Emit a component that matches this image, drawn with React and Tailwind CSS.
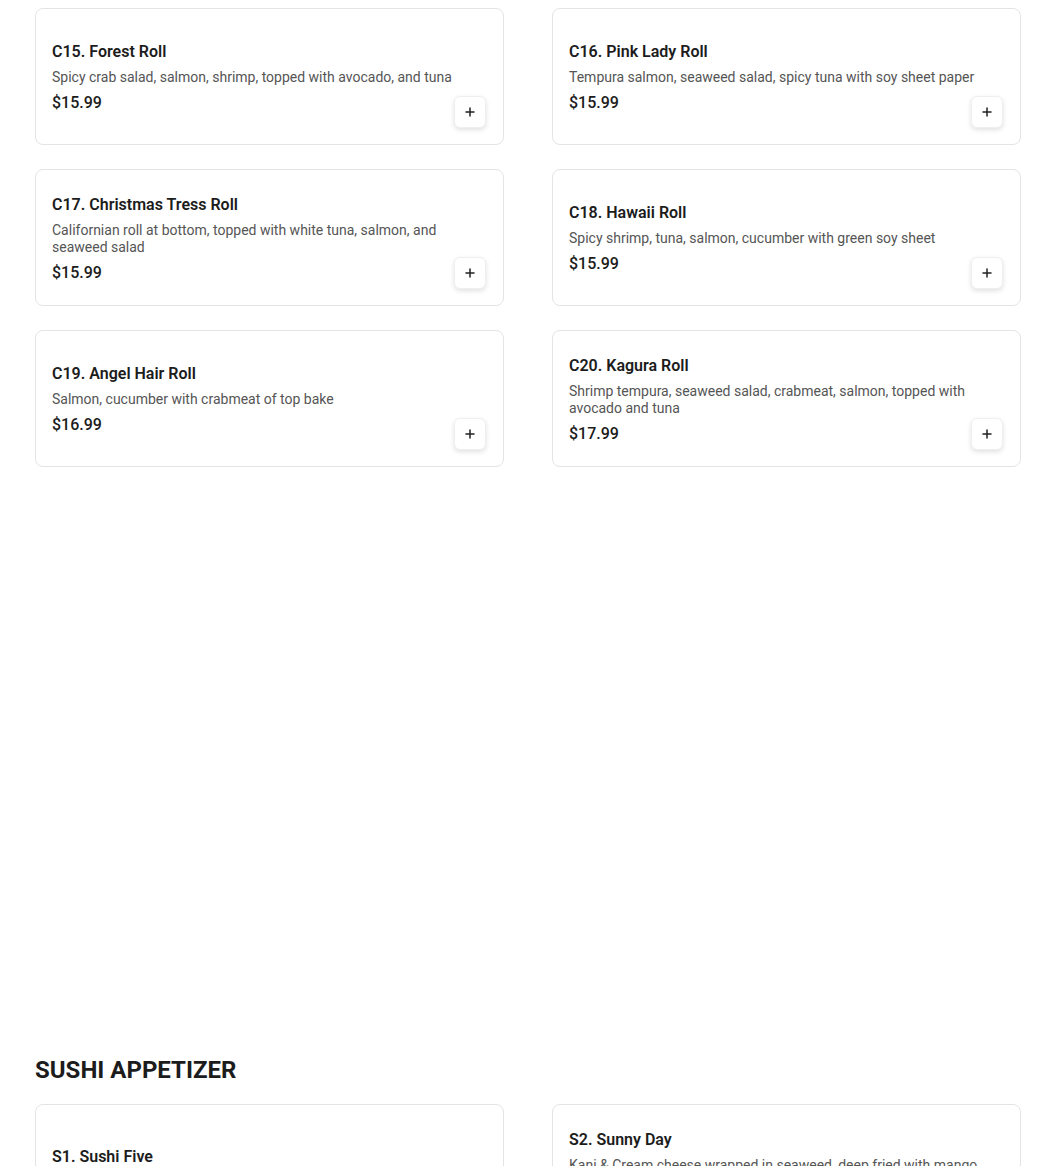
import React from 'react';

const rolls = [
  { code: 'C15', name: 'Forest Roll', desc: 'Spicy crab salad, salmon, shrimp, topped with avocado, and tuna', price: '15.99' },
  { code: 'C16', name: 'Pink Lady Roll', desc: 'Tempura salmon, seaweed salad, spicy tuna with soy sheet paper', price: '15.99' },
  { code: 'C17', name: 'Christmas Tress Roll', desc: 'Californian roll at bottom, topped with white tuna, salmon, and seaweed salad', price: '15.99' },
  { code: 'C18', name: 'Hawaii Roll', desc: 'Spicy shrimp, tuna, salmon, cucumber with green soy sheet', price: '15.99' },
  { code: 'C19', name: 'Angel Hair Roll', desc: 'Salmon, cucumber with crabmeat of top bake', price: '16.99' },
  { code: 'C20', name: 'Kagura Roll', desc: 'Shrimp tempura, seaweed salad, crabmeat, salmon, topped with avocado and tuna', price: '17.99' },
];

const appetizers = [
  { code: 'S1', name: 'Sushi Five', desc: '', price: '9.99' },
  { code: 'S2', name: 'Sunny Day', desc: 'Kani & Cream cheese wrapped in seaweed, deep fried with mango sauce on top', price: '8.99' },
];

const PlusIcon = () => (
  <svg width="10" height="10" viewBox="0 0 10 10" fill="none" stroke="#222" strokeWidth="1.5" strokeLinecap="round">
    <path d="M5 1v8M1 5h8" />
  </svg>
);

const MenuCard = ({ item }) => (
  <div className="relative h-[137px] rounded-lg border border-[#e4e4e4] bg-white px-4 pt-[2px] flex flex-col justify-center">
    <h3 className="text-[16px] leading-6 font-semibold text-[#1c1c1c]">
      {item.code}. {item.name}
    </h3>
    <p className="mt-[5px] text-[14px] leading-[17px] text-[#555]">{item.desc}</p>
    <p className="mt-[5px] text-[16px] leading-6 font-medium text-[#1c1c1c]">${item.price}</p>
    <button className="absolute right-[17px] bottom-4 w-8 h-8 rounded-md bg-white border border-[#efefef] shadow-[0_2px_5px_rgba(0,0,0,0.12)] flex items-center justify-center">
      <PlusIcon />
    </button>
  </div>
);

export default function App() {
  return (
    <div className="bg-white h-[1166px] overflow-hidden pl-[35px] pr-[29px] pt-2 font-['Roboto',sans-serif]">
      <div className="grid grid-cols-2 gap-x-[48px] gap-y-6">
        {rolls.map((r) => (
          <MenuCard key={r.code} item={r} />
        ))}
      </div>

      <h2 className="mt-[587px] text-[24px] leading-8 font-bold text-[#1c1c1c]">SUSHI APPETIZER</h2>

      <div className="mt-[18px] grid grid-cols-2 gap-x-[48px] gap-y-6">
        {appetizers.map((r) => (
          <MenuCard key={r.code} item={r} />
        ))}
      </div>
    </div>
  );
}
